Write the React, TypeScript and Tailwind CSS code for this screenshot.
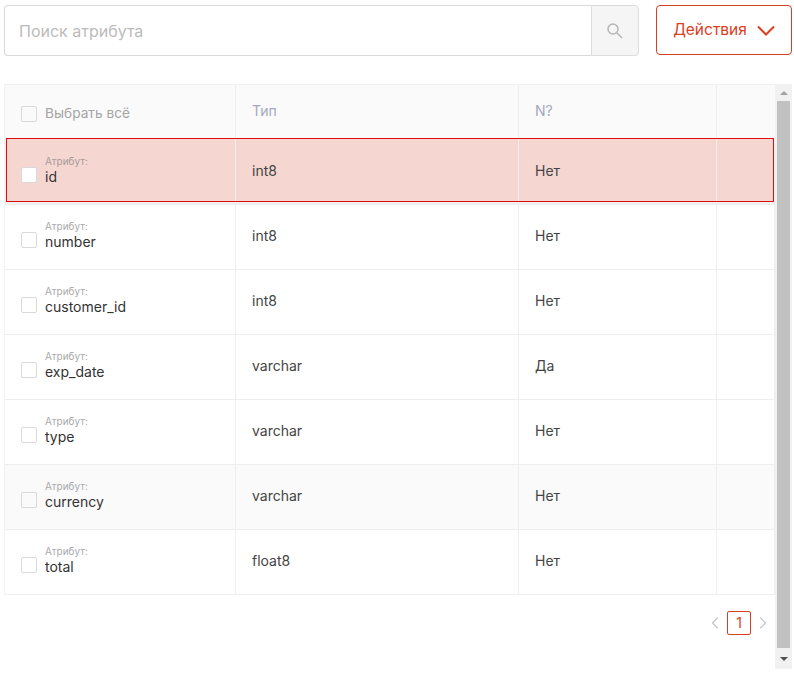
import { ChevronLeft, ChevronRight } from 'lucide-react';

const rows = [
    { name: 'id', type: 'int8', nullable: 'Нет', state: 'error' },
    { name: 'number', type: 'int8', nullable: 'Нет' },
    { name: 'customer_id', type: 'int8', nullable: 'Нет' },
    { name: 'exp_date', type: 'varchar', nullable: 'Да' },
    { name: 'type', type: 'varchar', nullable: 'Нет' },
    { name: 'currency', type: 'varchar', nullable: 'Нет', state: 'hover' },
    { name: 'total', type: 'float8', nullable: 'Нет' },
];

function Checkbox({ filled }: { filled?: boolean }) {
    return (
        <span className={`block h-4 w-4 shrink-0 rounded-[2px] border border-[#d9d9d9] ${filled ? 'bg-white' : 'bg-transparent'}`} />
    );
}

function NameCell({ name, filled }: { name: string; filled?: boolean }) {
    return (
        <>
            <span className="mt-[6px] block shrink-0">
                <Checkbox filled={filled} />
            </span>
            <div className="-mt-1 flex flex-col">
                <span className={`text-[10px] leading-[13px] ${filled ? 'text-[#a99c99]' : 'text-[#aaaaaa]'}`}>Атрибут:</span>
                <span className="text-sm leading-[17px] text-[#333333]">{name}</span>
            </div>
        </>
    );
}

function AttributeRow({ row }: { row: (typeof rows)[number] }) {
    const isError = row.state === 'error';
    const isHover = row.state === 'hover';
    return (
        <div className={`relative flex h-[65px] border-b border-r border-[#eeeeee] ${isHover ? 'bg-[#fafafa]' : 'bg-white'}`}>
            {!isError && (
                <>
                    <div className="flex w-[231px] items-center gap-2 border-r border-[#eeeeee] pl-4">
                        <NameCell name={row.name} />
                    </div>
                    <div className="flex w-[283px] items-center border-r border-[#eeeeee] pb-0.5 pl-4 text-sm text-[#444444]">{row.type}</div>
                    <div className="flex w-[198px] items-center border-r border-[#eeeeee] pb-0.5 pl-4 text-sm text-[#444444]">{row.nullable}</div>
                </>
            )}
            {isError && (
                <>
                    <div className="absolute inset-0 bg-[#f1f1f1]" />
                    <div className="absolute -top-[2px] bottom-[2px] left-px right-0 flex border border-[#e00b0b] bg-[#f5d6d1]">
                        <div className="flex w-[229px] items-center gap-2 border-r border-[#f3eeee] pl-[14px] pt-1">
                            <NameCell name={row.name} filled />
                        </div>
                        <div className="flex w-[283px] items-center border-r border-[#f3eeee] pt-0.5 pl-4 text-sm text-[#444444]">{row.type}</div>
                        <div className="flex w-[198px] items-center border-r border-[#f3eeee] pt-0.5 pl-4 text-sm text-[#444444]">{row.nullable}</div>
                    </div>
                </>
            )}
        </div>
    );
}

export default function App() {
    return (
        <div className="h-[674px] w-[794px] overflow-hidden bg-white font-['Inter','Liberation_Sans',sans-serif]">
            <div className="flex pl-1 pr-0.5 pt-[5px]">
                <div className="flex h-[51px] w-[635px]">
                    <div className="flex flex-1 items-center rounded-l border border-r-0 border-[#d9d9d9] pl-[14px] text-base text-[#bbbbbb]">
                        Поиск атрибута
                    </div>
                    <div className="flex w-[48px] items-center justify-center rounded-r border border-[#dddddd] bg-[#f5f5f5]">
                        <svg width="16" height="16" viewBox="0 0 16 16" fill="none" stroke="#b5b5b5" strokeWidth="1.5">
                            <circle cx="6" cy="6" r="5" />
                            <path d="M9.8 9.8L15 15" />
                        </svg>
                    </div>
                </div>
                <button className="ml-[17px] flex h-[50px] w-[136px] items-center justify-center gap-[10px] rounded border border-[#d8401f] text-[15.5px] text-[#d8401f]">
                    Действия
                    <svg width="18" height="11" viewBox="0 0 18 11" fill="none" stroke="currentColor" strokeWidth="2">
                        <path d="M1 1.5L9 9.5L17 1.5" />
                    </svg>
                </button>
            </div>

            <div className="mt-[28px] flex pl-1 pr-0.5">
                <div className="w-[771px]">
                    <div className="flex h-[56px] border border-r-0 border-[#f1f1f1] bg-[#fafafa]">
                        <div className="flex w-[231px] items-center gap-2 border-r border-[#eeeeee] pl-4 pt-0.5 text-[13.7px] text-[#a5a5a5]">
                            <span className="mt-0.5 block shrink-0">
                                <Checkbox />
                            </span>
                            Выбрать всё
                        </div>
                        <div className="flex w-[283px] items-center border-r border-[#eeeeee] pb-0.5 pl-4 text-sm text-[#a4a8c0]">Тип</div>
                        <div className="flex w-[198px] items-center border-r border-[#eeeeee] pb-0.5 pl-4 text-sm text-[#a4a8c0]">N?</div>
                        <div className="flex-1" />
                    </div>
                    <div className="border-l border-[#f1f1f1]">
                        {rows.map((row) => (
                            <AttributeRow key={row.name} row={row} />
                        ))}
                    </div>
                    <div className="mt-4 flex items-center justify-end gap-0.5 pr-0.5">
                        <ChevronLeft size={20} strokeWidth={1.4} className="text-[#c4c4c4]" />
                        <span className="flex h-6 w-6 items-center justify-center rounded-[2px] border border-[#d8401f] text-sm text-[#d8401f]">1</span>
                        <ChevronRight size={20} strokeWidth={1.4} className="text-[#c4c4c4]" />
                    </div>
                </div>

                <div className="flex h-[585px] w-[17px] flex-col items-center bg-[#f1f1f1]">
                    <div className="flex h-[17px] items-center justify-center">
                        <span className="h-0 w-0 border-x-4 border-b-4 border-x-transparent border-b-[#a3a3a3]" />
                    </div>
                    <div className="w-[13px] flex-1 bg-[#c1c1c1]" />
                    <div className="flex h-[21px] items-center justify-center">
                        <span className="h-0 w-0 border-x-4 border-t-4 border-x-transparent border-t-[#505050]" />
                    </div>
                </div>
            </div>
        </div>
    );
}
